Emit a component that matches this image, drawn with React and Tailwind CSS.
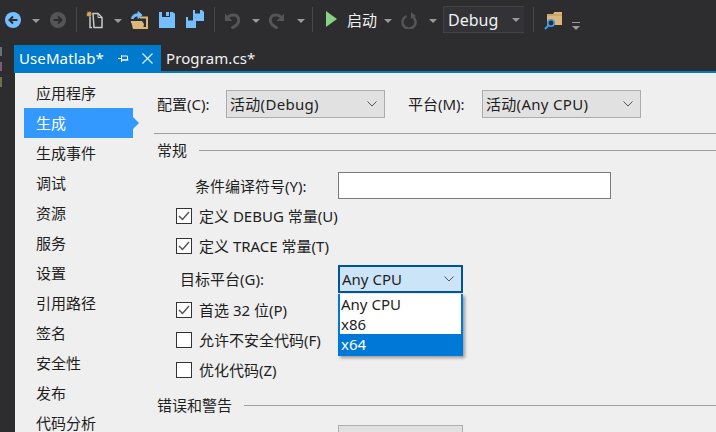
import React from 'react';

const navItems = ['应用程序', '生成', '生成事件', '调试', '资源', '服务', '设置', '引用路径', '签名', '安全性', '发布', '代码分析'];

function Caret({ className = '' }) {
  return (
    <svg width="8" height="4" viewBox="0 0 8 4" className={`shrink-0 ${className}`}>
      <path d="M0 0h8L4 4z" fill="#9a9a9c" />
    </svg>
  );
}

function Sep({ className = '' }) {
  return <div className={`w-px h-[25px] bg-[#48484b] shrink-0 ${className}`} />;
}

function NavCircle({ fill, arrow, flip, className = '' }) {
  return (
    <svg width="16" height="16" viewBox="0 0 16 16" className={`shrink-0 ${className}`}>
      <circle cx="8" cy="8" r="8" fill={fill} />
      <path d={flip ? 'M3.500 8h7.500M8 4.500 11.500 8 8 11.500' : 'M12.500 8H5M8 4.500 4.500 8 8 11.500'} stroke={arrow} strokeWidth="2" fill="none" />
    </svg>
  );
}

function NewProjectIcon({ className = '' }) {
  return (
    <svg width="18" height="19" viewBox="0 0 18 19" className={`shrink-0 ${className}`}>
      <path d="M4 6.500v11h2M7 3.500h5l4 4v10H8z" fill="none" stroke="#c8c8c8" strokeWidth="1.500" />
      <path d="M12 3.500v4h4" fill="none" stroke="#c8c8c8" strokeWidth="1" />
      <path d="M3 0.500l.7 1.800 1.800-.8-.8 1.800 1.800.7-1.800.7.8 1.800-1.800-.8L3 7.500l-.7-1.800-1.800.8.8-1.800L0 4l1.800-.7-.8-1.800 1.800.8z" fill="#d0a95a" />
    </svg>
  );
}

function OpenFolderIcon({ className = '' }) {
  return (
    <svg width="19" height="20" viewBox="0 0 19 20" className={`shrink-0 ${className}`}>
      <path d="M1 12h3l2 6h11V7.500h-7" fill="none" stroke="#dcb67a" strokeWidth="2" />
      <path d="M1 11h11l2 3-1 5H3z" fill="#dcb67a" />
      <path d="M1.500 8.500C2 5 5 3.500 8 4V1.500L12 5 8 8.500V6C5.500 5.700 4 7 3.500 8.500z" fill="#75beff" stroke="#75beff" />
    </svg>
  );
}

function SaveIcon({ className = '' }) {
  return (
    <svg width="16" height="16" viewBox="0 0 16 16" className={`shrink-0 ${className}`}>
      <path d="M0 0h3v5h8V0h3l2 2v14H0z" fill="#75beff" />
      <path d="M7 0h3v4H7z" fill="#75beff" />
    </svg>
  );
}

function SaveAllIcon({ className = '' }) {
  return (
    <svg width="18" height="18" viewBox="0 0 18 18" className={`shrink-0 ${className}`}>
      <path d="M7 0h2v3.500h5V0h2l2 2v9H9.500V7H7z" fill="#75beff" />
      <path d="M0 7h2v3.500h5V7h2l1 1v10H0z" fill="#75beff" />
    </svg>
  );
}

function UndoIcon({ flip, className = '' }) {
  return (
    <svg width="17" height="17" viewBox="0 0 17 17" className={`shrink-0 ${className}`} style={flip ? { transform: 'scaleX(-1)' } : undefined}>
      <path d="M2 7.500C4 3.500 9 2 12 3.500c3.500 2 3.500 7 .5 9.500L7.500 16.500" fill="none" stroke="#555557" strokeWidth="3" />
      <path d="M1 1.500v7.500h7.500z" fill="#555557" />
    </svg>
  );
}

function RefreshIcon({ className = '' }) {
  return (
    <svg width="16" height="17" viewBox="0 0 16 17" className={`shrink-0 ${className}`}>
      <path d="M5.500 4.100A6.500 6.500 0 1 0 10.500 4.100" fill="none" stroke="#555557" strokeWidth="2.500" />
      <path d="M10 0v7L15 4z" fill="#555557" />
    </svg>
  );
}

function FindFolderIcon({ className = '' }) {
  return (
    <svg width="19" height="20" viewBox="0 0 19 20" className={`shrink-0 ${className}`}>
      <path d="M3 3h6l1.500-2H18v13H3z" fill="#dcb67a" />
      <path d="M3 4h15" stroke="#b8955c" />
      <circle cx="7" cy="12" r="3.200" fill="#2d2d30" stroke="#3f9ae8" strokeWidth="1.600" />
      <path d="M4.500 14.500 1 18" stroke="#3f9ae8" strokeWidth="2" />
    </svg>
  );
}

function Chevron({ className = '' }) {
  return (
    <svg width="10" height="6" viewBox="0 0 10 6" className={`shrink-0 ${className}`}>
      <path d="M.5 .5 5 5 9.500 .5" fill="none" stroke="#555" strokeWidth="1" />
    </svg>
  );
}

function Select({ text, className = '' }) {
  return (
    <div className={`h-[28px] flex items-center justify-between pl-[3px] pr-[7px] bg-[#e1e1e1] border border-[#adadad] shrink-0 ${className}`}>
      <span className="tracking-[0.3px]">{text}</span>
      <Chevron />
    </div>
  );
}

function CheckRow({ checked, label, className = '' }) {
  return (
    <div className={`flex items-center h-[30px] pl-[19px] ${className}`}>
      <div className="w-[16px] h-[16px] bg-white border border-[#333] flex items-center justify-center shrink-0">
        {checked && (
          <svg width="12" height="10" viewBox="0 0 12 10">
            <path d="M1 5l3.500 3.500L11 1" fill="none" stroke="#555" strokeWidth="1.500" />
          </svg>
        )}
      </div>
      <span className="ml-[7px]">{label}</span>
    </div>
  );
}

function SectionHeader({ text, className = '' }) {
  return (
    <div className={`flex items-center ${className}`}>
      <span className="shrink-0">{text}</span>
      <div className="flex-1 h-px bg-[#a0a0a0] ml-[12px]" />
    </div>
  );
}

export default function App() {
  return (
    <div className="relative w-[716px] h-[432px] overflow-hidden bg-[#2d2d30] flex flex-col text-[15px] leading-[20px] text-[#1e1e1e] font-['Noto_Sans','Noto_Sans_CJK_SC',sans-serif]">
      {/* cut off side tab labels at the window edge */}
      <svg width="3" height="44" viewBox="0 0 3 44" className="absolute left-0 top-[46px]">
        <path d="M0 1h2v9H0z" fill="#66727c" />
        <path d="M0 16h2v9H0z" fill="#7d5a7d" />
        <path d="M0 31h2v10H0z" fill="#70704c" />
      </svg>

      {/* toolbar */}
      <div className="h-[45px] shrink-0 flex items-start pt-[12px]">
        <NavCircle fill="#75beff" arrow="#2d2d30" className="ml-[5px]" />
        <Caret className="ml-[11px] mt-[7px]" />
        <NavCircle fill="#555557" arrow="#2d2d30" flip className="ml-[10px]" />
        <Sep className="ml-[10px] -mt-[5px]" />
        <NewProjectIcon className="ml-[9px] -mt-[2px]" />
        <Caret className="ml-[10px] mt-[7px]" />
        <OpenFolderIcon className="ml-[8px] -mt-[2px]" />
        <SaveIcon className="ml-[10px]" />
        <SaveAllIcon className="ml-[11px] -mt-[2px]" />
        <Sep className="ml-[10px] -mt-[5px]" />
        <UndoIcon className="ml-[9px]" />
        <Caret className="ml-[11px] mt-[7px]" />
        <UndoIcon flip className="ml-[8px]" />
        <Caret className="ml-[12px] mt-[7px]" />
        <Sep className="ml-[7px] -mt-[5px]" />
        <svg width="11" height="16" viewBox="0 0 11 16" className="ml-[13px] -mt-[1px] shrink-0">
          <path d="M0 0l11 8-11 8z" fill="#89d185" />
        </svg>
        <span className="ml-[10px] text-[#f1f1f1] -mt-[2px] leading-[20px]">启动</span>
        <Caret className="ml-[7px] mt-[7px]" />
        <RefreshIcon className="ml-[9px]" />
        <Caret className="ml-[12px] mt-[7px]" />
        <div className="ml-[6px] -mt-[6px] w-[81px] h-[27px] bg-[#333337] border border-r-0 border-[#434346] flex items-center justify-between pl-[4px] pr-[4px] text-[16px] text-[#f1f1f1] shrink-0">
          <span>Debug</span>
          <Caret />
        </div>
        <Sep className="ml-[9px] -mt-[5px]" />
        <FindFolderIcon className="ml-[10px] -mt-[1px]" />
        <div className="ml-[9px] mt-[10px] flex flex-col items-center gap-[3px] shrink-0">
          <div className="w-[8px] h-px bg-[#9a9a9c]" />
          <Caret />
        </div>
      </div>

      {/* tabs */}
      <div className="h-[26px] shrink-0 flex pl-[14px]">
        <div className="w-[147px] bg-[#007acc] text-white flex items-center pl-[5px]">
          <span className="tracking-[0.1px]">UseMatlab*</span>
          <svg width="11" height="9" viewBox="0 0 11 9" className="ml-[14px] shrink-0">
            <path d="M0 4.500h3M3.500 1v7M3.500 2h6v4h-6M3.500 6h7" fill="none" stroke="#fff" strokeWidth="1" />
          </svg>
          <svg width="11" height="11" viewBox="0 0 11 11" className="ml-[13px] shrink-0">
            <path d="M.5 .5l10 10M10.500 .5l-10 10" stroke="#d5e9f7" strokeWidth="1.400" />
          </svg>
        </div>
        <div className="pl-[5px] flex items-center text-[#f1f1f1] tracking-[0.1px]">Program.cs*</div>
      </div>
      <div className="h-[2px] shrink-0 ml-[14px] bg-[#007acc]" />

      {/* body */}
      <div className="flex-1 flex min-h-0">
        <div className="w-[15px] shrink-0" />
        <div className="flex-1 bg-[#efefef] flex min-w-0">
          {/* side nav */}
          <div className="w-[124px] shrink-0 pl-[9px] pt-[5px]">
            {navItems.map((item) => (
              <div
                key={item}
                className={item === '生成'
                  ? 'h-[30px] w-[109px] flex items-center pl-[12px] bg-[#3399ff] text-white relative'
                  : 'h-[30px] flex items-center pl-[12px]'}
              >
                {item}
                {item === '生成' && (
                  <div className="absolute left-full top-[9px] w-0 h-0 border-y-[6px] border-y-transparent border-l-[6px] border-l-[#3399ff]" />
                )}
              </div>
            ))}
          </div>

          {/* settings */}
          <div className="flex-1 min-w-0 pl-[18px] pt-[17px]">
            <div className="flex items-center">
              <span className="w-[69px] shrink-0">配置(C):</span>
              <Select text="活动(Debug)" className="w-[159px]" />
              <span className="ml-[23px] w-[74px] shrink-0">平台(M):</span>
              <Select text="活动(Any CPU)" className="w-[159px]" />
            </div>
            <div className="h-px bg-[#a0a0a0] mt-[15px] -ml-[3px]" />
            <SectionHeader text="常规" className="mt-[6px]" />

            <div className="flex items-center mt-[12px]">
              <span className="w-[181px] shrink-0 pl-[38px]">条件编译符号(Y):</span>
              <div className="w-[273px] h-[27px] bg-white border border-[#7a7a7a]" />
            </div>
            <CheckRow checked label="定义 DEBUG 常量(U)" className="mt-[2px]" />
            <CheckRow checked label="定义 TRACE 常量(T)" />

            <div className="flex items-center mt-[4px] relative">
              <span className="w-[181px] shrink-0 pl-[23px]">目标平台(G):</span>
              <div className="w-[125px] h-[28px] bg-[#cce4f7] border-2 border-[#005499] flex items-center justify-between pl-[2px] pr-[7px]">
                <span>Any CPU</span>
                <Chevron />
              </div>
              {/* open dropdown list */}
              <div className="absolute left-[181px] top-full z-10 w-[125px] mt-px bg-white border-2 border-t-0 border-[#0078d7] shadow-[2px_2px_3px_rgba(0,0,0,0.35)]">
                <div className="h-[20px] flex items-center pl-[1px]">Any CPU</div>
                <div className="h-[20px] flex items-center pl-[1px]">x86</div>
                <div className="h-[20px] flex items-center pl-[1px] bg-[#0078d7] text-white">x64</div>
              </div>
            </div>

            <CheckRow checked label="首选 32 位(P)" className="mt-[2px]" />
            <CheckRow label="允许不安全代码(F)" />
            <CheckRow label="优化代码(Z)" />

            <SectionHeader text="错误和警告" className="mt-[10px]" />
            <div className="ml-[181px] mt-[10px] w-[125px] h-[20px] bg-[#e1e1e1] border border-[#adadad]" />
          </div>
        </div>
      </div>
    </div>
  );
}
